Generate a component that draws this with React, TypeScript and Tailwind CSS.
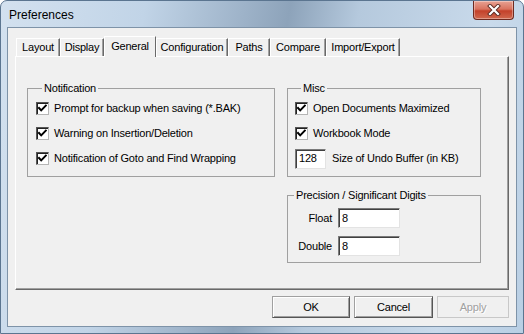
import React from 'react';

const tabs = [
  { label: 'Layout', w: 'w-[44px]' },
  { label: 'Display', w: 'w-[44px]' },
  { label: 'General', w: 'w-[52px]', active: true },
  { label: 'Configuration', w: 'w-[72px]' },
  { label: 'Paths', w: 'w-[42px]' },
  { label: 'Compare', w: 'w-[56px]' },
  { label: 'Import/Export', w: 'w-[74px]' },
];

function Check() {
  return (
    <span className="w-[13px] h-[13px] shrink-0 bg-white border border-t-[#555] border-l-[#555] border-r-[#b5b5b5] border-b-[#b5b5b5] shadow-[inset_1px_1px_0_#222] flex items-center justify-center">
      <svg width="11" height="11" viewBox="0 0 11 11">
        <path d="M2 5 L4.2 7.4 L8.8 2.6" fill="none" stroke="#000" strokeWidth="2" strokeLinecap="square" />
      </svg>
    </span>
  );
}

function TextBox({ value, w }: { value: string; w: string }) {
  return (
    <div className={`${w} h-[20px] bg-white border border-t-[#7a7a7a] border-l-[#7a7a7a] border-r-[#e3e3e3] border-b-[#e3e3e3] shadow-[inset_1px_1px_0_#404040] pl-[3px] flex items-center`}>
      {value}
    </div>
  );
}

function CheckRow({ label }: { label: string }) {
  return (
    <div className="h-[25px] flex items-center gap-[5px]">
      <Check />
      <span>{label}</span>
    </div>
  );
}

function Button({ label, w, disabled }: { label: string; w: string; disabled?: boolean }) {
  return (
    <div
      className={`${w} h-[22px] flex items-center justify-center border ${
        disabled
          ? 'border-[#c8c8c8] text-[#a0a0a0] [text-shadow:1px_1px_0_#fff]'
          : 'border-[#a0a0a0] border-r-[#555] border-b-[#555] shadow-[inset_1px_1px_0_#fff,inset_-1px_-1px_0_#a0a0a0]'
      }`}
    >
      {label}
    </div>
  );
}

export default function App() {
  return (
    <div className="w-[524px] h-[334px] flex flex-col rounded-t-[7px] border border-[#5b7590] bg-[linear-gradient(100deg,#d3e1ef_0%,#c1d4e7_25%,#9eb3c9_42%,#8da3ba_50%,#b5c9dd_62%,#c9daeb_85%,#b9cfe4_100%)] font-['Liberation_Sans',Arial,sans-serif] text-[11px] leading-[13px] tracking-[-0.2px] text-black overflow-hidden">
      <div className="h-[26px] flex justify-between shrink-0">
        <span className="pl-[8px] pt-[7px] text-[12px] leading-[14px] tracking-normal text-black">Preferences</span>
        <div className="mr-[9px] w-[41px] h-[19px] rounded-b-[4px] border border-t-0 border-[#6e2a20] bg-[linear-gradient(180deg,#e7a293_0%,#d9735f_45%,#c3412a_55%,#d0684e_100%)] shadow-[inset_0_0_0_1px_rgba(255,255,255,0.35)] flex items-center justify-center">
          <svg width="16" height="12" viewBox="0 0 16 12">
            <path d="M4 2 L12 10 M12 2 L4 10" stroke="#5a2a22" strokeWidth="4" strokeLinecap="square" />
            <path d="M4 2 L12 10 M12 2 L4 10" stroke="#fff" strokeWidth="2.2" strokeLinecap="square" />
          </svg>
        </div>
      </div>

      <div className="mx-[6px] flex-1 border border-[#7e93a8] bg-[#f0f0f0] flex flex-col pt-[8px] px-[7px] pb-[7px]">
        <div className="h-[20px] flex items-end pl-[1px]">
          {tabs.map(t =>
            t.active ? (
              <div
                key={t.label}
                className={`${t.w} h-[21px] -mb-px relative z-10 bg-[#f0f0f0] border-t border-l border-t-white border-l-white border-r border-r-[#696969] flex items-center justify-center pb-[2px]`}
              >
                {t.label}
              </div>
            ) : (
              <div
                key={t.label}
                className={`${t.w} h-[18px] border-t border-l border-t-white border-l-white border-r border-r-[#696969] shadow-[inset_-1px_0_0_#a0a0a0] flex items-center justify-center`}
              >
                {t.label}
              </div>
            )
          )}
        </div>

        <div className="h-[234px] border border-t-white border-l-white border-r-[#696969] border-b-[#696969] shadow-[inset_-1px_-1px_0_#a0a0a0] pt-[25px] pl-[11px] flex gap-[12px]">
          <fieldset className="w-[248px] h-[95px] border border-[#a0a0a0] pl-[8px] pt-[1px]">
            <legend className="ml-[6px] px-[2px] leading-[13px]">Notification</legend>
            <CheckRow label="Prompt for backup when saving (*.BAK)" />
            <CheckRow label="Warning on Insertion/Deletion" />
            <CheckRow label="Notification of Goto and Find Wrapping" />
          </fieldset>

          <div className="flex flex-col gap-[12px]">
            <fieldset className="w-[194px] h-[95px] border border-[#a0a0a0] pl-[7px] pt-[1px]">
              <legend className="ml-[6px] px-[2px] leading-[13px]">Misc</legend>
              <CheckRow label="Open Documents Maximized" />
              <CheckRow label="Workbook Mode" />
              <div className="h-[25px] flex items-center gap-[6px]">
                <TextBox value="128" w="w-[31px]" />
                <span>Size of Undo Buffer (in KB)</span>
              </div>
            </fieldset>

            <fieldset className="w-[194px] h-[74px] border border-[#a0a0a0] pt-[6px]">
              <legend className="ml-[6px] px-[2px] leading-[13px]">Precision / Significant Digits</legend>
              <div className="flex items-center">
                <span className="w-[44px] text-right">Float</span>
                <div className="ml-[6px]">
                  <TextBox value="8" w="w-[62px]" />
                </div>
              </div>
              <div className="flex items-center mt-[8px]">
                <span className="w-[44px] text-right">Double</span>
                <div className="ml-[6px]">
                  <TextBox value="8" w="w-[62px]" />
                </div>
              </div>
            </fieldset>
          </div>
        </div>

        <div className="mt-[6px] flex justify-end gap-[4px]">
          <Button label="OK" w="w-[78px]" />
          <Button label="Cancel" w="w-[79px]" />
          <Button label="Apply" w="w-[72px]" disabled />
        </div>
      </div>
      <div className="h-[6px] shrink-0" />
    </div>
  );
}
